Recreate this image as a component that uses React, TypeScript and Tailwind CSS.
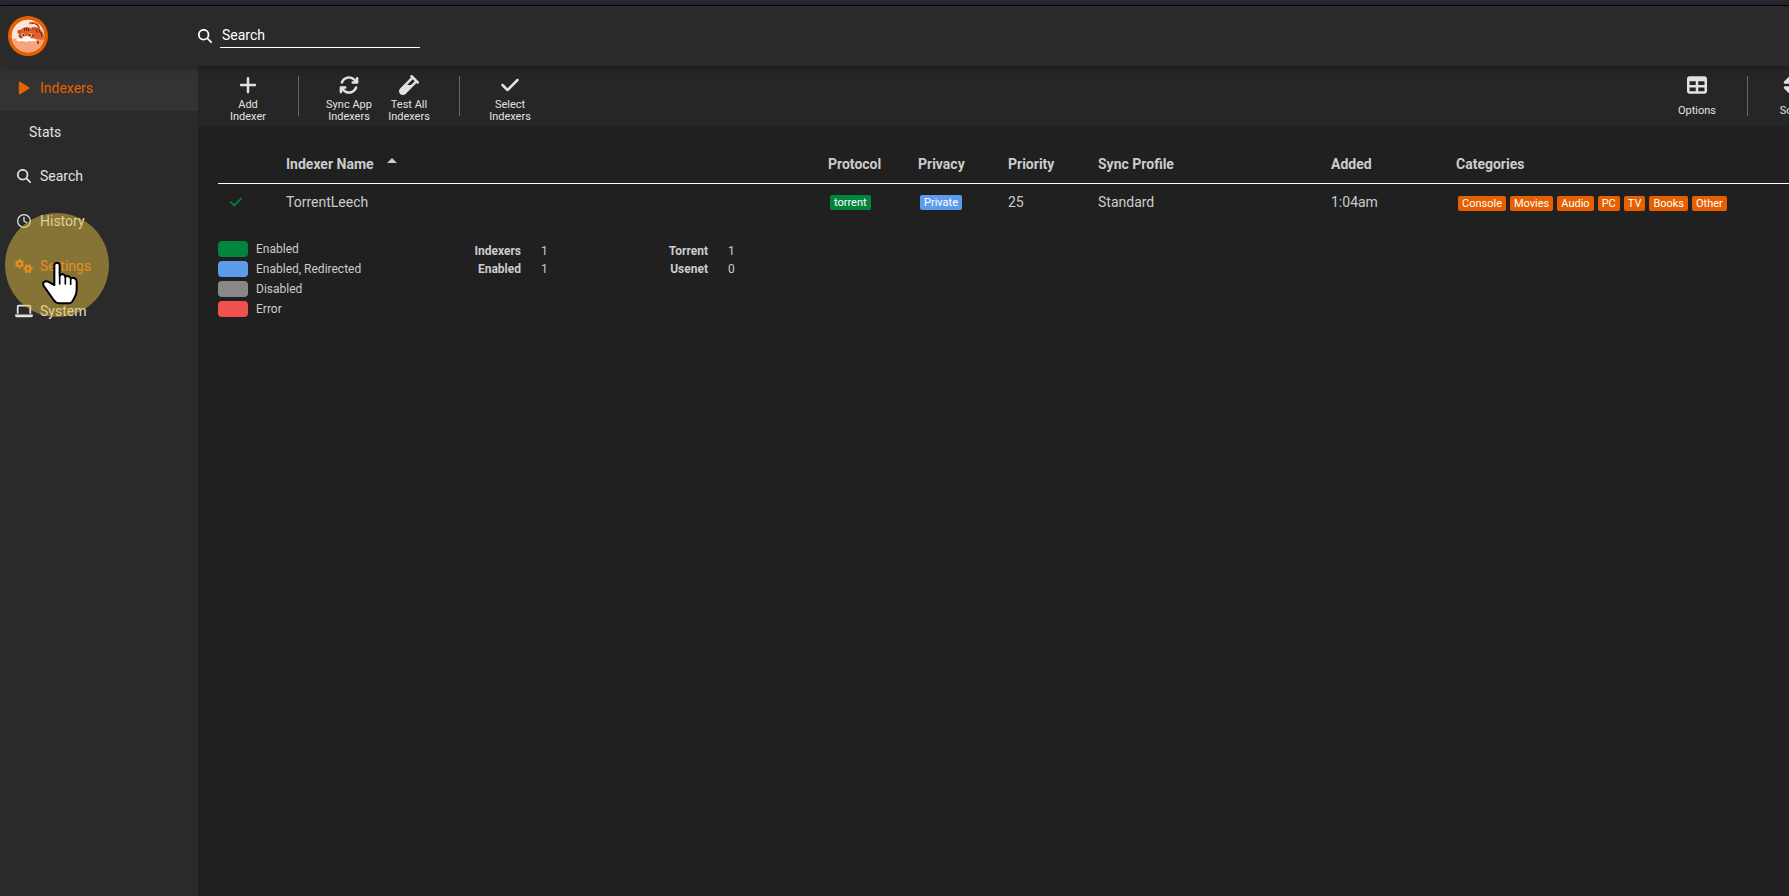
import clsx from "clsx";
import type { ReactNode } from "react";
import {
  FaArrowsRotate,
  FaCheck,
  FaGears,
  FaLaptop,
  FaMagnifyingGlass,
  FaPlay,
  FaPlus,
  FaRegClock,
  FaSort,
  FaTable,
  FaVial,
} from "react-icons/fa6";

const navItems = [
  { label: "Search", icon: <FaMagnifyingGlass /> },
  { label: "History", icon: <FaRegClock /> },
  { label: "Settings", icon: <FaGears className="size-[18px]" />, hover: true },
  { label: "System", icon: <FaLaptop className="size-[18px]" /> },
];

const categories = ["Console", "Movies", "Audio", "PC", "TV", "Books", "Other"];

const legend = [
  { label: "Enabled", color: "bg-[#00853d]" },
  { label: "Enabled, Redirected", color: "bg-[#5d9cec]" },
  { label: "Disabled", color: "bg-[#888888]" },
  { label: "Error", color: "bg-[#f05050]" },
];

const totals = [
  [
    { label: "Indexers", value: 1 },
    { label: "Enabled", value: 1 },
  ],
  [
    { label: "Torrent", value: 1 },
    { label: "Usenet", value: 0 },
  ],
];

function Logo() {
  return (
    <svg viewBox="0 0 120 120" className="size-10">
      <circle cx="60" cy="60" r="60" fill="#e66000" />
      <circle cx="60" cy="60" r="49" fill="#fde6d8" />
      <path d="M12 70q20 -6 48 0t48 0a49 49 0 0 1-96 0z" fill="#f7a581" />
      <path
        d="M70 34c14 -4 32 4 36 18c3 10 2 16 0 20l-30 -2z"
        fill="#e2602c"
      />
      <path
        d="M66 22c12 -3 22 0 26 10c2 5 0 8 -4 6"
        fill="none"
        stroke="#d9572a"
        strokeWidth="6"
        strokeLinecap="round"
      />
      <path
        d="M32 56c2 -16 12 -22 24 -22s22 8 22 22c0 10 -10 18 -22 18s-26 -6 -24 -18z"
        fill="#e2602c"
      />
      <circle cx="34" cy="47" r="6" fill="#c94f22" />
      <circle cx="75" cy="40" r="5" fill="#c94f22" />
      <path
        d="M50 36v9M56 34v10M62 36v9M33 60l7 2M78 58l-6 3M84 38l4 12M92 40l6 12M100 50l2 12M72 20l4 4M84 24l4 4"
        stroke="#5b2414"
        strokeWidth="3"
      />
      <path
        d="M24 72c2 -6 10 -6 16 -4c6 -4 10 -8 16 -8s12 6 16 8c6 -2 12 0 12 6c-8 3 -14 2 -18 0c-8 4 -14 4 -22 0c-6 2 -14 3 -20 -2z"
        fill="#fff"
      />
      <circle cx="45" cy="57" r="5" fill="#f8e27a" />
      <circle cx="67" cy="57" r="5" fill="#f8e27a" />
      <circle cx="46" cy="57" r="3" fill="#1f1f1f" />
      <circle cx="66" cy="57" r="3" fill="#1f1f1f" />
      <path d="M90 74v10" stroke="#8c3418" strokeWidth="5" />
    </svg>
  );
}

function ToolbarButton({
  label,
  icon,
  className,
}: {
  label: string;
  icon: ReactNode;
  className?: string;
}) {
  return (
    <button
      className={clsx(
        "flex shrink-0 flex-col items-center pt-2 text-[11px] leading-3",
        className ?? "w-[60px]"
      )}
    >
      <span className="flex h-[22px] items-center text-[20px]">{icon}</span>
      <span className="flex h-8 w-12 items-center justify-center">{label}</span>
    </button>
  );
}

function Separator() {
  return <div className="mx-5 my-[10px] w-px shrink-0 bg-[#666666]" />;
}

function Badge({ label, color }: { label: string; color: string }) {
  return (
    <span
      className={clsx(
        "rounded-xs px-1 text-[11px] leading-[15px] text-white",
        color
      )}
    >
      {label}
    </span>
  );
}

function Pointer() {
  return (
    <div className="pointer-events-none absolute top-[213px] left-[5px] size-[104px] rounded-full bg-[#e2bc42]/50">
      <svg viewBox="0 0 108 132" className="absolute top-12 left-[37px] h-11 w-9">
        <path
          d="M37 72V13a8 8 0 0 1 16 0V44c4-7 15-5 17 3c5-4 14-1 16 5c8-4 18 0 18 10V88c0 14-5 20-9 26c-3 10-8 13-16 13H52c-8 0-13-4-17-10L6 76c-8-12 4-18 12-14z"
          fill="#fff"
          stroke="#000"
          strokeWidth="6"
          strokeLinejoin="round"
        />
        <path
          d="M53 44v25M70 48v21M86 54v16"
          stroke="#000"
          strokeWidth="5"
          strokeLinecap="round"
        />
      </svg>
    </div>
  );
}

export default function App() {
  return (
    <div className="relative flex min-h-screen flex-col overflow-hidden bg-[#202020] font-['Roboto',sans-serif] text-sm text-[#cccccc]">
      <div className="h-[6px] border-b border-black bg-[#2b2a33]" />

      <header className="z-10 flex h-[60px] items-center bg-[#2a2a2a] text-white shadow-[0_0_10px_rgba(0,0,0,0.5)]">
        <a href="#home" aria-label="Home" className="w-[198px] pl-2">
          <Logo />
        </a>
        <label htmlFor="search">
          <FaMagnifyingGlass aria-label="Search" />
        </label>
        <input
          id="search"
          placeholder="Search"
          className="ml-2 h-6 w-[200px] border-b border-white px-[2px] pb-[2px] outline-none placeholder:text-white"
        />
      </header>

      <div className="flex grow">
        <nav className="w-[198px] shrink-0 bg-[#2a2a2a] text-[#e1e2e3]">
          <a
            href="#indexers"
            className="flex h-[45px] items-center bg-[#333333] pb-[2px] pl-[15px] text-[#e66000]"
          >
            <span className="mr-[7px] flex w-[18px] justify-center">
              <FaPlay />
            </span>
            Indexers
          </a>
          <a href="#stats" className="flex h-[42px] items-center pl-[29px]">
            Stats
          </a>
          {navItems.map((item) => (
            <a
              key={item.label}
              href={`#${item.label.toLowerCase()}`}
              className={clsx(
                "flex h-[45px] items-center pl-[15px]",
                item.hover && "text-[#e66000]"
              )}
            >
              <span className="mr-[7px] flex w-[18px] justify-center">
                {item.icon}
              </span>
              {item.label}
            </a>
          ))}
        </nav>

        <main className="min-w-0 grow">
          <div className="flex h-[60px] overflow-hidden bg-[#262626] pl-5 text-[#e1e2e3]">
            <ToolbarButton label="Add Indexer" icon={<FaPlus />} />
            <Separator />
            <ToolbarButton label="Sync App Indexers" icon={<FaArrowsRotate />} />
            <ToolbarButton label="Test All Indexers" icon={<FaVial />} />
            <Separator />
            <ToolbarButton label="Select Indexers" icon={<FaCheck />} />
            <div className="-mr-[23px] ml-auto flex">
              <ToolbarButton label="Options" icon={<FaTable />} />
              <Separator />
              <ToolbarButton label="Sort" icon={<FaSort />} className="w-11" />
            </div>
          </div>

          <div className="pt-5 pl-5">
            <table className="w-full table-fixed text-left">
              <thead>
                <tr className="h-[37px] border-b border-white">
                  <th className="w-[60px]" />
                  <th className="px-2">
                    <span className="flex items-center gap-[13px]">
                      Indexer Name
                      <svg viewBox="0 0 10 12" className="h-3 w-[10px]">
                        <path d="M0 5l5-5l5 5z" fill="currentColor" />
                      </svg>
                    </span>
                  </th>
                  <th className="w-[90px] px-2">Protocol</th>
                  <th className="w-[90px] px-2">Privacy</th>
                  <th className="w-[90px] px-2">Priority</th>
                  <th className="w-[233px] px-2">Sync Profile</th>
                  <th className="w-[125px] px-2">Added</th>
                  <th className="w-[341px] px-2">Categories</th>
                </tr>
              </thead>
              <tbody>
                <tr className="h-[38px]">
                  <td className="pl-[11px] text-[#00853d]">
                    <FaCheck />
                  </td>
                  <td className="px-2">TorrentLeech</td>
                  <td className="px-[10px]">
                    <div className="flex">
                      <Badge label="torrent" color="bg-[#00853d]" />
                    </div>
                  </td>
                  <td className="px-[10px]">
                    <div className="flex">
                      <Badge label="Private" color="bg-[#5d9cec]" />
                    </div>
                  </td>
                  <td className="px-2">25</td>
                  <td className="px-2">Standard</td>
                  <td className="px-2">1:04am</td>
                  <td className="px-[10px] pt-[2px]">
                    <div className="flex gap-1">
                      {categories.map((name) => (
                        <Badge key={name} label={name} color="bg-[#e66000]" />
                      ))}
                    </div>
                  </td>
                </tr>
              </tbody>
            </table>

            <div className="mt-[18px] flex text-xs">
              <ul className="w-[218px]">
                {legend.map((item) => (
                  <li key={item.label} className="flex h-5 items-center">
                    <span
                      className={clsx("mr-2 h-4 w-[30px] rounded", item.color)}
                    />
                    {item.label}
                  </li>
                ))}
              </ul>
              {totals.map((group) => (
                <dl
                  key={group[0].label}
                  className="mt-[3px] grid w-[187px] auto-rows-[18px] grid-cols-[85px_1fr] gap-x-5 leading-[18px]"
                >
                  {group.map((item) => (
                    <div key={item.label} className="contents">
                      <dt className="text-right font-bold">{item.label}</dt>
                      <dd>{item.value}</dd>
                    </div>
                  ))}
                </dl>
              ))}
            </div>
          </div>
        </main>
      </div>

      <Pointer />
    </div>
  );
}
